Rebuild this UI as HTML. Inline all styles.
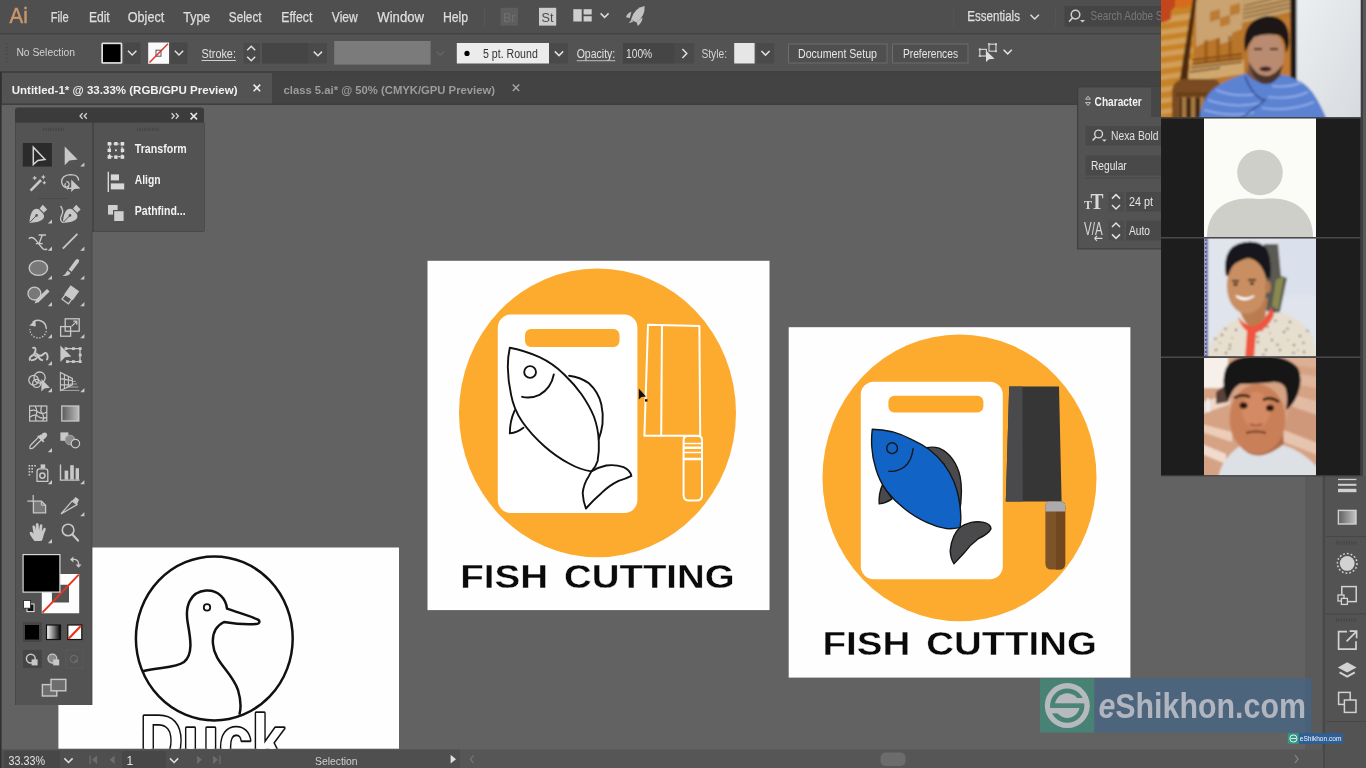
<!DOCTYPE html>
<html lang="en"><head><meta charset="utf-8"><title>Adobe Illustrator - Fish Cutting class</title>
<style>
html,body{margin:0;padding:0;background:#555;overflow:hidden;}
body{width:1366px;height:768px;font-family:"Liberation Sans",sans-serif;}
svg{display:block;position:absolute;left:0;top:0;filter:blur(0.45px);}
text{font-family:"Liberation Sans",sans-serif;}
.b{font-weight:bold;}
</style></head><body>
<svg width="1366" height="768" viewBox="0 0 1366 768">
<!-- canvas -->
<rect x="0" y="0" width="1366" height="768" fill="#626262"/>
<!-- menu bar -->
<rect x="0" y="0" width="1366" height="33" fill="#4f4f4f"/>
<!-- control bar -->
<rect x="0" y="33" width="1366" height="39" fill="#535353"/>
<rect x="0" y="33" width="1366" height="1.5" fill="#444"/>
<!-- tab bar -->
<rect x="0" y="72" width="1366" height="32" fill="#434343"/>
<rect x="0" y="71" width="1366" height="1.5" fill="#404040"/>
<rect x="2" y="73" width="270" height="31" fill="#535353"/>
<rect x="0" y="103.4" width="1366" height="1.6" fill="#3f3f3f"/>
<rect x="0" y="72" width="1.6" height="696" fill="#303030"/>

<!-- ===== menu bar ===== -->
<g fill="#dedede" font-size="13.9" stroke="#dedede" stroke-width="0.25">
<text x="9.5" y="23.4" font-size="22.8" fill="#c9976b" stroke="#c9976b" stroke-width="0.5" textLength="18.2" lengthAdjust="spacingAndGlyphs">Ai</text>
<text x="50.8" y="21.8" textLength="18" lengthAdjust="spacingAndGlyphs">File</text>
<text x="88.9" y="21.8" textLength="20.8" lengthAdjust="spacingAndGlyphs">Edit</text>
<text x="127.7" y="21.8" textLength="36.6" lengthAdjust="spacingAndGlyphs">Object</text>
<text x="183.3" y="21.8" textLength="27" lengthAdjust="spacingAndGlyphs">Type</text>
<text x="228.8" y="21.8" textLength="32.8" lengthAdjust="spacingAndGlyphs">Select</text>
<text x="281.3" y="21.8" textLength="31" lengthAdjust="spacingAndGlyphs">Effect</text>
<text x="331.8" y="21.8" textLength="26" lengthAdjust="spacingAndGlyphs">View</text>
<text x="377.3" y="21.8" textLength="46.7" lengthAdjust="spacingAndGlyphs">Window</text>
<text x="442.9" y="21.8" textLength="25.3" lengthAdjust="spacingAndGlyphs">Help</text>
<text x="967.2" y="20.5" font-size="14.3" textLength="52.8" lengthAdjust="spacingAndGlyphs">Essentials</text>
</g>
<rect x="484" y="8" width="1" height="18" fill="#575757"/>
<!-- Br -->
<rect x="500.5" y="7.8" width="17.5" height="17.8" fill="#5e5e5e"/>
<text x="503" y="21.6" font-size="12.5" fill="#707070" textLength="12.5" lengthAdjust="spacingAndGlyphs">Br</text>
<!-- St -->
<rect x="539" y="7.8" width="17.2" height="17.8" fill="#cdcdcd"/>
<text x="541.6" y="21.8" font-size="13" fill="#4a4a4a" textLength="12" lengthAdjust="spacingAndGlyphs">St</text>
<!-- arrange docs icon -->
<g fill="#cfcfcf"><rect x="573.3" y="9.2" width="8.4" height="12.3"/><rect x="583.6" y="9.2" width="8.1" height="5.3"/><rect x="583.6" y="16.2" width="8.1" height="5.3"/></g>
<path d="M600.6,13.4 l4,4 l4,-4" fill="none" stroke="#dcdcdc" stroke-width="1.5"/>
<!-- rocket icon -->
<g fill="#c2c2c2">
<path d="M644.6,6 q-10.6,2 -13.6,13.6 l5.4,3 q9,-6.4 8.2,-16.6z"/>
<path d="M631.4,11.8 q-4,1.4 -5.4,5.4 l3.8,0.8z"/>
<path d="M642.6,17.6 q-0.4,5 -4.8,8.4 l-1.2,-4z"/>
<path d="M631.6,19.8 l-3,3.4 l5,-1.6z"/>
</g>
<!-- essentials chevron -->
<path d="M1030.5,14.8 l4.2,4.2 l4.2,-4.2" fill="none" stroke="#dcdcdc" stroke-width="1.5"/>
<rect x="953" y="6" width="1" height="21" fill="#545454"/>
<rect x="1055" y="6" width="1" height="21" fill="#545454"/>
<!-- search box -->
<rect x="1064.6" y="6" width="100" height="20.6" fill="#454545"/>
<circle cx="1075.5" cy="14.6" r="4.3" fill="none" stroke="#d0d0d0" stroke-width="1.5"/>
<path d="M1072.5,18 l-3.4,3.6" stroke="#d0d0d0" stroke-width="1.6"/>
<path d="M1080,20 h5 l-2.5,2.5z" fill="#d0d0d0"/>
<text x="1090.5" y="20.4" font-size="12.2" fill="#787878" textLength="72" lengthAdjust="spacingAndGlyphs">Search Adobe S</text>

<!-- ===== control bar ===== -->
<g fill="#444"><rect x="6" y="43" width="1.2" height="1.6"/><rect x="6" y="46.5" width="1.2" height="1.6"/><rect x="6" y="50" width="1.2" height="1.6"/><rect x="6" y="53.5" width="1.2" height="1.6"/><rect x="6" y="57" width="1.2" height="1.6"/><rect x="6" y="60.5" width="1.2" height="1.6"/></g>
<text x="16.4" y="56.4" font-size="11.8" fill="#d2d2d2" textLength="58.6" lengthAdjust="spacingAndGlyphs">No Selection</text>
<!-- fill swatch -->
<rect x="101.3" y="42.5" width="21" height="21.3" rx="1.5" fill="#e2e2e2"/>
<rect x="103" y="44.2" width="17.6" height="17.9" fill="#000"/>
<rect x="123.7" y="42.5" width="16.8" height="21.3" fill="#484848"/>
<path d="M128,50.8 l4.2,4.2 l4.2,-4.2" fill="none" stroke="#e0e0e0" stroke-width="1.5"/>
<!-- stroke swatch -->
<rect x="148.2" y="42.5" width="20.8" height="21.3" fill="#fbfbfb"/>
<rect x="156" y="50.2" width="5" height="6" fill="none" stroke="#555" stroke-width="1"/>
<path d="M149.5,62.5 l18.5,-18.8" stroke="#e2332c" stroke-width="1.5"/>
<rect x="170.6" y="42.5" width="16.8" height="21.3" fill="#484848"/>
<path d="M174.8,50.8 l4.2,4.2 l4.2,-4.2" fill="none" stroke="#e0e0e0" stroke-width="1.5"/>
<!-- stroke -->
<text x="201.6" y="58" font-size="12" fill="#e0e0e0" textLength="34.3" lengthAdjust="spacingAndGlyphs">Stroke:</text>
<rect x="201.6" y="60" width="34.3" height="1" fill="#cfcfcf"/>
<rect x="243.5" y="43" width="16.3" height="20.5" fill="#4a4a4a"/>
<path d="M247.2,50.2 l4,-4 l4,4 M247.2,56.8 l4,4 l4,-4" fill="none" stroke="#e0e0e0" stroke-width="1.5"/>
<rect x="262" y="43" width="46.6" height="20.5" fill="#454545"/>
<rect x="308.6" y="43" width="18.4" height="20.5" fill="#4a4a4a"/>
<path d="M313.8,51.6 l4.1,4.1 l4.1,-4.1" fill="none" stroke="#e0e0e0" stroke-width="1.5"/>
<!-- variable width -->
<rect x="334.2" y="41" width="96.4" height="23.6" fill="#7b7b7b"/>
<path d="M436.6,51.6 l3.6,3.6 l3.6,-3.6" fill="none" stroke="#686868" stroke-width="1.3"/>
<!-- brush -->
<rect x="456.8" y="43" width="92.2" height="20.5" fill="#ececec"/>
<circle cx="467" cy="53.4" r="2.6" fill="#000"/>
<text x="483" y="58" font-size="12" fill="#333" textLength="54.8" lengthAdjust="spacingAndGlyphs">5 pt. Round</text>
<rect x="549" y="43" width="19" height="20.5" fill="#4a4a4a"/>
<path d="M554.8,51.4 l4.2,4.2 l4.2,-4.2" fill="none" stroke="#e0e0e0" stroke-width="1.5"/>
<!-- opacity -->
<text x="576.7" y="58" font-size="12" fill="#e0e0e0" textLength="38.6" lengthAdjust="spacingAndGlyphs">Opacity:</text>
<rect x="576.7" y="60.2" width="38.6" height="1" fill="#bdbdbd"/>
<rect x="622.9" y="43" width="51.8" height="20.5" fill="#454545"/>
<text x="626" y="58" font-size="12" fill="#e0e0e0" textLength="26.2" lengthAdjust="spacingAndGlyphs">100%</text>
<rect x="674.7" y="43" width="19.5" height="20.5" fill="#4a4a4a"/>
<path d="M682.4,49 l4.4,4.5 l-4.4,4.5" fill="none" stroke="#e0e0e0" stroke-width="1.5"/>
<!-- style -->
<text x="701.4" y="58" font-size="12" fill="#d2d2d2" textLength="25.6" lengthAdjust="spacingAndGlyphs">Style:</text>
<rect x="734.2" y="43" width="20.4" height="20.5" fill="#e6e6e6"/>
<rect x="756.4" y="43" width="17.8" height="20.5" fill="#4a4a4a"/><path d="M761.4,51 l4.1,4.1 l4.1,-4.1" fill="none" stroke="#e0e0e0" stroke-width="1.5"/>
<!-- buttons -->
<rect x="788.5" y="44" width="98.5" height="19" fill="#4f4f4f" stroke="#6c6c6c" stroke-width="1"/>
<text x="798" y="58" font-size="12" fill="#e6e6e6" textLength="79" lengthAdjust="spacingAndGlyphs">Document Setup</text>
<rect x="892.5" y="44" width="75.5" height="19" fill="#4f4f4f" stroke="#6c6c6c" stroke-width="1"/>
<text x="903" y="58" font-size="12" fill="#e6e6e6" textLength="55" lengthAdjust="spacingAndGlyphs">Preferences</text>
<!-- align-to icon -->
<g fill="none" stroke="#cdcdcd" stroke-width="1.2"><rect x="989" y="44.2" width="7" height="7"/><rect x="979.8" y="49.4" width="6.6" height="6.6"/></g>
<g fill="#cdcdcd"><rect x="988" y="43.2" width="2" height="2"/><rect x="995" y="43.2" width="2" height="2"/><rect x="995" y="50.2" width="2" height="2"/><rect x="978.8" y="48.4" width="2" height="2"/><rect x="978.8" y="55" width="2" height="2"/></g>
<path d="M986,50.6 v11.4 l3,-2.8 l5.6,-0.4z" fill="#e0e0e0"/>
<path d="M1003.6,49.8 l4.1,4.1 l4.1,-4.1" fill="none" stroke="#e0e0e0" stroke-width="1.5"/>

<!-- ===== tabs ===== -->
<text class="b" x="11.7" y="93.6" font-size="11.6" fill="#f2f2f2" textLength="225.8" lengthAdjust="spacingAndGlyphs">Untitled-1* @ 33.33% (RGB/GPU Preview)</text>
<path d="M253.6,84.6 l6.6,6.6 M260.2,84.6 l-6.6,6.6" stroke="#f0f0f0" stroke-width="1.5"/>
<text class="b" x="283.5" y="93.6" font-size="11.6" fill="#9c9c9c" textLength="211.5" lengthAdjust="spacingAndGlyphs">class 5.ai* @ 50% (CMYK/GPU Preview)</text>
<path d="M512.8,84.6 l6.4,6.4 M519.2,84.6 l-6.4,6.4" stroke="#a8a8a8" stroke-width="1.4"/>

<!-- artboard 1 -->
<rect x="427.5" y="260.8" width="342" height="349.3" fill="#fefefe"/>
<ellipse cx="597.5" cy="412.9" rx="138.5" ry="144.4" fill="#fdab2f"/>
<rect x="497.8" y="314.6" width="139.6" height="198.4" rx="13" fill="#fff"/>
<rect x="525" y="329" width="94.5" height="18" rx="6" fill="#fdab2f"/>
<!-- artboard 2 -->
<rect x="788.7" y="327.2" width="341.7" height="350.4" fill="#fefefe"/>
<ellipse cx="959.5" cy="477.8" rx="137" ry="143.4" fill="#fdab2f"/>
<rect x="860.8" y="381.7" width="142" height="197.5" rx="13" fill="#fff"/>
<rect x="888.4" y="395.7" width="95" height="16.8" rx="6" fill="#fdab2f"/>
<!-- artboard 3 (duck) -->
<rect x="58.4" y="547.5" width="340.6" height="201.2" fill="#fefefe"/>

<!-- ===== artboard 1 details ===== -->
<g fill="none" stroke="#111" stroke-width="1.9" stroke-linejoin="round" stroke-linecap="round">
 <!-- fish body -->
 <path d="M509.8,347.8 C520,349.6 530,353 539.5,357.2 C549,361.6 557,367.4 564.2,374.5 C571,381 576.6,387.4 581.5,394.3 C586.4,401.4 590.6,408.6 593.9,416.5 C596.8,424.4 598.4,432.6 598.8,441.3 C599.2,448 598.8,454.6 597.6,461 C596.4,465 594.4,468.6 591.4,471.4 C583.6,470.2 576,467.4 569.1,463.5 C560,458.6 551.8,452.8 544.4,446.2 C536,438.8 528.4,430.6 522.1,421.5 C516.4,413 512.8,404 511,394.3 C509,385.4 508,376.4 507.8,367.1 C507.8,360.4 508.4,354 509.8,347.8z"/>
 <!-- dorsal fin -->
 <path d="M569.1,375.7 C576.4,376.6 583.2,379.2 588.9,383.2 C595,388.8 599.4,395.8 601.3,404.2 C602.8,410.8 603.2,417.4 602.5,424 C601.8,429.2 600.6,434.2 598.8,438.8"/>
 <!-- tail -->
 <path d="M591.4,471.4 C596,468.6 601,466.6 606.2,465.5 C612,464.6 618,465.2 623.5,467.2 C627.6,469 630.4,472 631.4,475.9 C627.4,478 623,479.6 618.6,480.8 C612,484 606.2,488.2 601.3,493.2 C595.6,498 590.6,503.2 585.9,508.5 C584,503.6 583,498.4 582.7,493.2 C583.2,487 585.4,481.2 588.9,475.9z"/>
 <!-- pectoral fin -->
 <path d="M514.7,410.4 C511.4,417.6 509.8,425.4 509.8,433.4 C514.8,432.8 519.4,430.8 523.4,427.7"/>
 <!-- eye + smile -->
 <circle cx="530.1" cy="372" r="5.9"/>
 <path d="M522.1,396.8 C528,398.2 534,397.4 539.5,394.8 C547,390.6 552,383.6 553.8,374.5"/>
</g>
<!-- knife outline -->
<g fill="none" stroke="#fff" stroke-width="2" stroke-linejoin="round">
 <path d="M648,324.8 L699.4,326 L700.2,435.8 L644.4,435.8z"/>
 <path d="M662,325 L661.2,435.8"/>
 <path d="M683.6,440 q0,-4 4,-4 h10.4 q4,0 4,4 v55 q0,5.6 -5.6,5.6 h-7.2 q-5.6,0 -5.6,-5.6z"/>
 <path d="M683.6,443.4 h18.4 M683.6,452.6 h18.4" stroke-width="1.5"/>
 <path d="M683.6,447.8 h18.4 M683.6,459 h18.4" stroke-width="2.4"/>
</g>
<!-- cursor -->
<path d="M638.8,388.6 V399.4 L641.4,397 L646,396.6z" fill="#111"/>
<rect x="645" y="399.2" width="2.4" height="2.4" fill="#111"/>
<!-- caption -->
<g class="b" font-size="33.9" fill="#0a0a0a" stroke="#fff" stroke-width="0.35"><text x="460.2" y="587.6" textLength="88" lengthAdjust="spacingAndGlyphs">FISH</text><text x="564" y="587.6" textLength="170.6" lengthAdjust="spacingAndGlyphs">CUTTING</text></g>
<!-- ===== artboard 2 details ===== -->
<!-- knife -->
<path d="M1009.2,386.6 L1059,386.6 L1061.6,501.4 L1005.8,501.4z" fill="#363637"/>
<path d="M1009.2,386.6 L1022.4,386.6 L1022.8,501.4 L1005.8,501.4z" fill="#4a4a4c"/>
<path d="M1045.4,506 q0,-4.6 4.6,-4.6 h10.6 q4.6,0 4.6,4.6 v57.6 q0,6 -6,6 h-7.8 q-6,0 -6,-6z" fill="#7d532a"/>
<path d="M1056,501.4 h4.6 q4.6,0 4.6,4.6 v57.6 q0,6 -6,6 h-3.2z" fill="#70471f"/>
<path d="M1045.4,511.6 v-5.6 q0,-4.6 4.6,-4.6 h10.6 q4.6,0 4.6,4.6 v5.6z" fill="#ababab"/>
<!-- fish -->
<g stroke="#151515" stroke-width="1.4" stroke-linejoin="round">
 <path d="M926.7,447.7 C931,446.8 935.2,447 939.1,448.2 C944.6,450.6 949.2,454.4 952.7,459.3 C956.4,464.6 958.8,470.4 960.1,476.7 C961.2,482.4 961.6,488.2 961.3,494 C961.2,500 960.6,506 959.6,512 L944,464z" fill="#4a4a4c"/>
 <path d="M960.1,527.3 C963.4,525 967.2,523.4 971.2,522.4 C975.4,521.6 979.6,521.6 983.6,522.4 C987.6,523.2 990.6,525.4 991,528.6 C989.6,531.8 984,536 978.6,538.5 C973,542.6 968,547.6 963.8,553.3 C960.4,557 957,560.6 953.9,563.7 C951.6,560 950.4,555.6 950.2,550.8 C950.6,545.6 951.8,540.6 953.9,536 C955.6,532.8 957.6,529.8 960.1,527.3z" fill="#4a4a4c"/>
 <path d="M882.7,484.1 C880,490.4 878.6,497 879.2,503.9 C883.8,503.4 888.2,501.6 892.1,498.9z" fill="#4a4a4c"/>
 <path d="M872.3,429.2 C879,429.4 885.6,430.2 892.1,431.7 C899,433.6 905.6,436.2 911.9,439.6 C918,442.4 923.8,445.6 929.2,449.5 C934.8,453.8 939.8,458.8 944,464.3 C948,469.6 951.4,475.4 953.9,481.6 C956.2,487.2 957.8,493 958.9,498.9 C960,504.6 960.6,510.4 960.8,516.2 C960.9,520 960.6,523.6 960.1,527.3 C955.6,528.6 951,529 946.5,528.6 C939.6,527.6 933,525.4 926.7,522.4 C918.6,518.8 911.2,514.2 904.5,508.8 C898,503.8 892.2,498 887.1,491.5 C882.2,484.8 878.4,477.4 876,469.2 C873.6,462 872.2,454.6 871.8,447 C871.4,441 871.6,435 872.3,429.2z" fill="#1263c6"/>
 <circle cx="892.1" cy="448.2" r="5.4" fill="#1263c6"/>
 <path d="M888.4,471.2 C894,472 899.4,470.6 904.5,466.8 C909.8,462.4 912.4,456 913.1,448.2" fill="none"/>
</g>
<g class="b" font-size="33.9" fill="#0a0a0a" stroke="#fff" stroke-width="0.35"><text x="822.4" y="655" textLength="88" lengthAdjust="spacingAndGlyphs">FISH</text><text x="926.2" y="655" textLength="170.6" lengthAdjust="spacingAndGlyphs">CUTTING</text></g>
<!-- ===== duck artboard ===== -->
<defs><clipPath id="cduck"><rect x="58.4" y="547.5" width="340.6" height="201.2"/></clipPath></defs>
<g clip-path="url(#cduck)" fill="none" stroke="#111" stroke-width="2.5" stroke-linejoin="round" stroke-linecap="round">
 <ellipse cx="214.3" cy="638.4" rx="78.4" ry="82"/>
 <path d="M143.6,671 C160,667 176,668 184,662 C194,654 190,636 187.6,622 C185,606 190,592 206,590.6 C219,590 226,599 227,608.6 C238,612.6 250,616 258,619.6 C260.4,621 259.6,624 256,624 C246,624.6 234,623.6 224,622 C216,626 212,634 213,644 C214,662 232,672 238,690 C241,700 241,708 239.6,713.6"/>
 <circle cx="207" cy="607.4" r="3.2" stroke-width="1.8"/>
 <text x="140" y="766.4" font-size="73" font-weight="bold" fill="#fff" stroke="#111" stroke-width="3.6" textLength="145" lengthAdjust="spacingAndGlyphs" style="paint-order:stroke">Duck</text>
</g>

<!-- ===== tools panel ===== -->
<path d="M15,125 v-14.6 q0,-3 3,-3 h183 q3,0 3,3 v14.6z" fill="#3b3b3b"/>
<rect x="15" y="122.6" width="77" height="582.4" fill="#535353"/>
<rect x="15" y="122.6" width="1" height="582.4" fill="#484848"/>
<rect x="92" y="122.6" width="2.2" height="109.4" fill="#454545"/><rect x="91.4" y="232" width="1" height="473" fill="#4a4a4a"/>
<rect x="94" y="122.6" width="110.2" height="108.4" fill="#535353"/>
<rect x="94" y="231" width="110.2" height="1" fill="#4a4a4a"/>
<rect x="204" y="122.6" width="1" height="108.4" fill="#4d4d4d"/>
<!-- header glyphs -->
<g fill="none" stroke="#d2d2d2" stroke-width="1.3">
 <path d="M82.6,113.2 l-2.6,2.8 l2.6,2.8 M86.8,113.2 l-2.6,2.8 l2.6,2.8"/>
 <path d="M171.6,113.2 l2.6,2.8 l-2.6,2.8 M175.8,113.2 l2.6,2.8 l-2.6,2.8"/>
 <path d="M190.6,113 l6.4,6.4 M197,113 l-6.4,6.4" stroke-width="1.6" stroke="#e6e6e6"/>
</g>
<g stroke="#454545" stroke-width="3.4" stroke-dasharray="1.2 1.3"><path d="M43,129.4 h20.6"/><path d="M137,129.4 h22.6"/></g>
<rect x="38" y="198" width="30" height="1" fill="#494949"/>
<!-- selected tool bg -->
<rect x="22.8" y="143" width="29.1" height="23.6" fill="#2b2b2b"/>
<g id="tri" fill="#c8c8c8">
 <path d="M84.4,162.4 v4.2 h-4.2z"/><path d="M52,219.4 v4.2 h-4.2z"/><path d="M52,246.6 v4.2 h-4.2z"/><path d="M84.4,246.6 v4.2 h-4.2z"/>
 <path d="M52,275.4 v4.2 h-4.2z"/><path d="M84.4,275.4 v4.2 h-4.2z"/><path d="M52,302 v4.2 h-4.2z"/><path d="M84.4,302 v4.2 h-4.2z"/>
 <path d="M52,334 v4.2 h-4.2z"/><path d="M84.4,334 v4.2 h-4.2z"/><path d="M52,361 v4.2 h-4.2z"/>
 <path d="M52,388 v4.2 h-4.2z"/><path d="M84.4,388 v4.2 h-4.2z"/><path d="M52,448 v4.2 h-4.2z"/>
 <path d="M52,480 v4.2 h-4.2z"/><path d="M84.4,480 v4.2 h-4.2z"/><path d="M84.4,512 v4.2 h-4.2z"/><path d="M52,539 v4.2 h-4.2z"/>
</g>
<!-- row1: selection / direct selection -->
<path d="M33.3,147.2 V164.6 L37.8,160.4 L45,159.4z" fill="none" stroke="#d4d4d4" stroke-width="1.5" stroke-linejoin="miter"/>
<path d="M64.7,146.6 V165.2 L69.4,160.6 L77.6,159.4z" fill="#c8c8c8"/>
<!-- row2: magic wand / lasso -->
<path d="M30.6,190.6 l10.4,-10.6" stroke="#c8c8c8" stroke-width="2.6"/>
<g fill="#c8c8c8"><path d="M34.7,175.4 l0.8,1.8 l1.8,0.8 l-1.8,0.8 l-0.8,1.8 l-0.8,-1.8 l-1.8,-0.8 l1.8,-0.8z"/><path d="M43.3,174.6 l0.8,1.6 l1.6,0.8 l-1.6,0.8 l-0.8,1.6 l-0.8,-1.6 l-1.6,-0.8 l1.6,-0.8z"/><path d="M44.3,180.6 l0.7,1.4 l1.4,0.7 l-1.4,0.7 l-0.7,1.4 l-0.7,-1.4 l-1.4,-0.7 l1.4,-0.7z"/></g>
<g fill="none" stroke="#c8c8c8" stroke-width="1.3"><path d="M73,188 q-10,2 -11.4,-6 q0,-7 9,-7.4 q8,0 8,6"/><path d="M66.4,181.5 q3.2,0.4 2.6,3.4 q-1,2.6 -3.4,1.6 q-1.6,-1.6 0.2,-3.2"/><path d="M67,189.4 q2,-1 1.6,-3"/></g>
<path d="M71.2,179.4 V192 L74.2,189 L80.4,188.4z" fill="#c8c8c8"/>
<!-- row3: pen / curvature -->
<g fill="#c8c8c8">
 <path d="M29.5,222.7 C29.8,217 31,212 34,209.6 C36,208.2 38,208.6 39.4,209.8 L43,213.6 C44.4,215.4 44.4,217.4 43,219 C40,222 34.6,222.6 29.5,222.7z"/>
 <path d="M42.8,204.8 L47.2,209.4 L43.8,212.8 L39.6,208.4z"/>
 <path d="M62.9,222.7 C63.2,217 64.4,212 67.4,209.6 C69.4,208.2 71.4,208.6 72.8,209.8 L76.4,213.6 C77.8,215.4 77.8,217.4 76.4,219 C73.4,222 68,222.6 62.9,222.7z"/>
 <path d="M76.2,204.8 L80.6,209.4 L77.2,212.8 L73,208.4z"/>
</g>
<path d="M30,222.2 l6,-6.2" stroke="#535353" stroke-width="1"/><circle cx="36.6" cy="215.4" r="1.3" fill="#535353"/>
<path d="M63.4,222.2 l6,-6.2" stroke="#535353" stroke-width="1"/><circle cx="70" cy="215.4" r="1.3" fill="#535353"/>
<path d="M60.6,206 q3.6,5 1,9.4 q-2.6,4.6 1.4,7.4" fill="none" stroke="#c8c8c8" stroke-width="1.3"/>
<!-- row4: touch type / line -->
<g fill="none" stroke="#c8c8c8" stroke-width="1.4"><path d="M28.8,238.6 q3.4,-2.4 6.4,0.8 l7.4,9 q2.2,2 4.6,0.4"/><path d="M38.6,235 h7.4 M42.3,235 l-3,8 M35.8,243.6 h7"/></g>
<path d="M62.8,248.6 L77.4,233.8" stroke="#c8c8c8" stroke-width="1.8"/>
<!-- row5: ellipse / brush -->
<ellipse cx="38.4" cy="268" rx="9.2" ry="7.4" fill="#787878" stroke="#c8c8c8" stroke-width="1.4"/>
<path d="M78.6,259.4 q1.2,1 0,3 l-7,9.4 l-3,-2.4 l7,-9.4 q1.6,-1.6 3,-0.6z M67.6,270.6 l3,2.4 q-1.6,3.4 -8,3 q3,-1.6 5,-5.4z" fill="#c8c8c8"/>
<!-- row6: shaper / eraser -->
<circle cx="34.4" cy="293.6" r="6.4" fill="#787878" stroke="#c8c8c8" stroke-width="1.3"/>
<path d="M34.6,303.6 l1.4,-4 l11,-10.6 l2.6,2.6 l-11,10.6z" fill="#c8c8c8"/>
<path d="M70.6,285.2 l8.6,6 l-6.4,9 l-8.6,-6z" fill="#c8c8c8"/>
<path d="M65.4,294.6 l-3.4,4.6 l6.4,4.6 l3.6,-4.8z" fill="none" stroke="#c8c8c8" stroke-width="1.3"/>
<!-- row7: rotate / scale -->
<path d="M32.6,322.4 a8.2,8.2 0 0 1 13.6,5.6" fill="none" stroke="#c8c8c8" stroke-width="1.5"/>
<path d="M46.2,328 a8.2,8.2 0 1 1 -16.2,1" fill="none" stroke="#c8c8c8" stroke-width="1.3" stroke-dasharray="1.4 1.6"/>
<path d="M29.4,325.6 l6,-5.6 l0.4,6.4z" fill="#c8c8c8"/>
<g fill="none" stroke="#c8c8c8" stroke-width="1.3"><rect x="60.6" y="326.6" width="10" height="9.6"/><rect x="65.2" y="318.8" width="14" height="12.4"/><path d="M71.6,326.4 l5,-5 M73.2,321.2 h3.6 v3.6"/></g>
<!-- row8: warp / free transform -->
<g fill="none" stroke="#c8c8c8" stroke-width="1.9"><path d="M32.4,348 q4,-1.4 3,3 q-1,4 -4,5 q-2.4,1.8 -1.4,4.6 M36,353 q4,5 7.6,1 q3,-3 4,2 q0.4,3 -1.2,4 M31,360.4 q6,-0.6 7,-5 q1,4 5,5"/></g>
<circle cx="35.6" cy="355.6" r="1.4" fill="#c8c8c8"/>
<path d="M60.4,345.4 V362 L65,357.2 L71.4,356.4z" fill="#c8c8c8"/>
<g fill="none" stroke="#c8c8c8" stroke-width="1.3"><path d="M66,348.6 h14 v13 h-12"/></g>
<g fill="#c8c8c8"><rect x="64.6" y="347.2" width="2.8" height="2.8"/><rect x="72" y="347.2" width="2.8" height="2.8"/><rect x="78.8" y="347.2" width="2.8" height="2.8"/><rect x="78.8" y="353.6" width="2.8" height="2.8"/><rect x="78.8" y="360.2" width="2.8" height="2.8"/><rect x="72" y="360.2" width="2.8" height="2.8"/><rect x="66" y="360.2" width="2.8" height="2.8"/></g>
<!-- row9: shape builder / perspective -->
<g fill="none" stroke="#c8c8c8" stroke-width="1.3"><circle cx="33.6" cy="380.2" r="4.8"/><circle cx="39.6" cy="377.6" r="5.6"/><circle cx="36.6" cy="383.4" r="4"/></g>
<path d="M41.4,379 V391.4 L44.4,388.4 L50,387.8z" fill="#c8c8c8"/>
<g fill="none" stroke="#c8c8c8" stroke-width="1.1"><path d="M60.4,372.4 V390.6 L72.4,385 V378.4z M64.4,374.4 V388.8 M68.4,376.4 V386.8 M60.4,378.6 l12,2 M60.4,384.6 l12,0.4"/><path d="M72.4,381.4 h3.4 M70,384 h7 M66,387 h12.4 M61,390.4 h18.4" stroke-width="0.9" opacity="0.8"/></g>
<!-- row10: mesh / gradient -->
<defs><linearGradient id="tg" x1="0" y1="0" x2="1" y2="0"><stop offset="0" stop-color="#5a5a5a"/><stop offset="1" stop-color="#bdbdbd"/></linearGradient>
<linearGradient id="tg2" x1="0" y1="0" x2="1" y2="0"><stop offset="0" stop-color="#fff"/><stop offset="1" stop-color="#000"/></linearGradient></defs>
<g fill="none" stroke="#c8c8c8" stroke-width="1.2"><rect x="29.6" y="406" width="17.2" height="15"/><path d="M29.6,411 q5,-2 8.6,1 q4,3 8.6,0 M29.6,417.4 q5,-4 8.6,-1 q4,3 8.6,1 M35,406 q3,5 1,9 q-1,3 0,6 M41.6,406 q-2,5 1,8 q2,4 0,7"/></g>
<rect x="61.8" y="406" width="17" height="15" fill="url(#tg)" stroke="#c8c8c8" stroke-width="1.3"/>
<!-- row11: eyedropper / blend -->
<path d="M30,448.4 q-0.8,-2 1,-3.6 l9.4,-9.4 l2.6,2.6 l-9.4,9.4 q-2,1.6 -3.6,1z" fill="none" stroke="#c8c8c8" stroke-width="1.3"/>
<path d="M39.6,436.6 l3,-3.4 q2.4,-1.6 4,0 q1.4,1.6 -0.2,3.8 l-3.2,3 1.2,1.2 -1.2,1.2 -6,-6 1.2,-1.2z" fill="#c8c8c8"/>
<rect x="60.4" y="432.4" width="8" height="8.4" fill="#c8c8c8"/>
<circle cx="70" cy="440" r="4.8" fill="#8a8a8a" stroke="#a8a8a8" stroke-width="1"/>
<circle cx="75.4" cy="443.6" r="4.2" fill="#535353" stroke="#c8c8c8" stroke-width="1.3"/>
<!-- row12: symbol sprayer / graph -->
<g fill="#c8c8c8"><rect x="28.6" y="465" width="1.6" height="1.6"/><rect x="31.4" y="465" width="1.6" height="1.6"/><rect x="34.2" y="465" width="1.6" height="1.6"/><rect x="28.6" y="468" width="1.6" height="1.6"/><rect x="31.4" y="468" width="1.6" height="1.6"/><rect x="28.6" y="471" width="1.6" height="1.6"/><rect x="31.4" y="471" width="1.6" height="1.6"/><rect x="28.6" y="474" width="1.6" height="1.6"/><rect x="40.6" y="464.4" width="4.6" height="4"/></g>
<path d="M37,481.4 v-10 q0,-2.6 2.6,-2.6 h5.6 q2.6,0 2.6,2.6 v10z" fill="none" stroke="#c8c8c8" stroke-width="1.3"/>
<circle cx="42.4" cy="475.6" r="2.6" fill="none" stroke="#c8c8c8" stroke-width="1.5"/>
<g fill="#c8c8c8"><path d="M59.8,464.4 h1.4 v15 h18.4 v1.4 h-19.8z"/><rect x="64.6" y="470.6" width="3.6" height="9"/><rect x="70.2" y="465.2" width="3.6" height="14.4"/><rect x="75.6" y="468.2" width="3.4" height="11.4"/></g>
<!-- row13: artboard / slice -->
<path d="M33.4,501.2 h8 l4.2,4 v7.6 h-12.2z" fill="#787878" stroke="#c8c8c8" stroke-width="1.3"/>
<path d="M41.4,501.2 v4 h4.2" fill="none" stroke="#c8c8c8" stroke-width="1"/>
<path d="M33.2,495 v6 M27.4,501.2 h6" stroke="#c8c8c8" stroke-width="1.2"/>
<path d="M61,514 l11,-13 l5,3.6z" fill="none" stroke="#c8c8c8" stroke-width="1.2"/><path d="M72,501 l3.6,-4 l3.4,2.4 l-2,5.2z" fill="#c8c8c8"/>
<!-- row14: hand / zoom -->
<path d="M34.4,541 q-1.6,-2 -4.4,-6.6 q-1,-2 0.6,-2.6 q1.4,-0.2 3,2 l-1.2,-7 q0,-1.6 1.2,-1.6 q1.2,0 1.6,1.6 l0.8,3.4 l-0.2,-5.6 q0.2,-1.6 1.4,-1.6 q1.4,0 1.4,1.6 l0.4,5.6 l0.8,-4.8 q0.4,-1.4 1.6,-1.2 q1.2,0.2 1,1.8 l-0.6,5.6 l1.6,-3 q0.8,-1.2 1.8,-0.6 q1,0.6 0.4,2 q-2,4.6 -2.4,7 q-0.6,3 -2,4z" fill="#c8c8c8"/>
<circle cx="68.1" cy="530" r="5.8" fill="none" stroke="#c8c8c8" stroke-width="1.6"/>
<path d="M72.4,534.6 l5.6,6" stroke="#c8c8c8" stroke-width="2.2" stroke-linecap="round"/>
<!-- fill / stroke swatches -->
<path d="M41.8,574 h37.4 v39.3 h-37.4z M51.9,584.7 v17.9 h17.1 v-17.9z" fill="#fdfdfd" fill-rule="evenodd"/>
<path d="M42.4,612.6 L78.8,574.6" stroke="#e8341f" stroke-width="2"/>
<rect x="22.5" y="554" width="38" height="38.7" fill="#d8d8d8"/>
<rect x="23.7" y="555.2" width="35.6" height="36.3" fill="#000"/>
<g fill="none" stroke="#c8c8c8" stroke-width="1.4"><path d="M71.6,559.4 h3 q4,0.6 4,5 v1.4"/></g>
<path d="M70,559.4 l3.4,-3 v6z M78.6,567.8 l-3,-3.4 h6z" fill="#c8c8c8"/>
<rect x="27" y="604" width="7" height="7.6" fill="#111" stroke="#e8e8e8" stroke-width="1"/>
<rect x="23.6" y="600.6" width="7" height="7.6" fill="#fff" stroke="#222" stroke-width="0.8"/>
<!-- color / gradient / none -->
<rect x="22.9" y="622.3" width="18.9" height="19.7" fill="#454545"/>
<rect x="25" y="625" width="14" height="14.5" fill="#000"/>
<rect x="46.5" y="625" width="14" height="14.5" fill="url(#tg2)" stroke="#111" stroke-width="1.2"/>
<rect x="67.8" y="625" width="14" height="14.5" fill="#fff" stroke="#111" stroke-width="1.2"/>
<path d="M68.6,638.8 l12.4,-13" stroke="#e8341f" stroke-width="2.2"/>
<!-- draw modes -->
<rect x="22.9" y="649.8" width="18.9" height="18.2" fill="#454545"/>
<circle cx="30.8" cy="658.6" r="4.4" fill="none" stroke="#c8c8c8" stroke-width="1.5"/><rect x="31.6" y="659.4" width="6" height="6" fill="#c8c8c8"/>
<circle cx="52.4" cy="658.6" r="4.4" fill="#8a8a8a" stroke="#c8c8c8" stroke-width="1.3"/><rect x="53.2" y="659.4" width="6" height="6" fill="#c8c8c8"/>
<rect x="66" y="650" width="17" height="18" fill="none" stroke="#5c5c5c" stroke-width="0.8"/>
<circle cx="74" cy="659" r="3.6" fill="none" stroke="#6a6a6a" stroke-width="1.3"/><rect x="74.6" y="659.6" width="3" height="3" fill="#6a6a6a"/>
<!-- screen mode -->
<rect x="42.4" y="684.6" width="14.4" height="11.4" fill="#6e6e6e" stroke="#c8c8c8" stroke-width="1.4"/>
<rect x="51" y="679.4" width="14.8" height="11.4" fill="#6e6e6e" stroke="#c8c8c8" stroke-width="1.4"/>
<!-- float panel -->
<g fill="none" stroke="#d8d8d8" stroke-width="1.2"><rect x="109.6" y="144" width="12.4" height="12.6" stroke-dasharray="2.2 1.6"/></g>
<g fill="#e0e0e0"><rect x="107.6" y="142" width="3.6" height="3.6"/><rect x="120.6" y="142" width="3.6" height="3.6"/><rect x="107.6" y="155.2" width="3.6" height="3.6"/><rect x="120.6" y="155.2" width="3.6" height="3.6"/><rect x="115" y="149.4" width="1.8" height="1.8"/><rect x="114.2" y="142" width="3.4" height="3.4"/><rect x="114.2" y="155.4" width="3.4" height="3.4"/><rect x="107.6" y="148.6" width="3.4" height="3.4"/><rect x="120.8" y="148.6" width="3.4" height="3.4"/></g>
<text class="b" x="134.8" y="153.2" font-size="12" fill="#f2f2f2" textLength="52" lengthAdjust="spacingAndGlyphs">Transform</text>
<g fill="#d8d8d8"><rect x="107.6" y="171.8" width="1.4" height="20.2"/><rect x="110.8" y="174.4" width="8.2" height="6"/><rect x="110.8" y="183.4" width="13.4" height="6"/></g>
<text class="b" x="134.8" y="184.4" font-size="12" fill="#f2f2f2" textLength="25.8" lengthAdjust="spacingAndGlyphs">Align</text>
<rect x="108" y="205" width="9.6" height="9.6" fill="#d0d0d0"/><rect x="113.6" y="210.6" width="10.6" height="11" fill="#d0d0d0" stroke="#535353" stroke-width="1.2"/>
<rect x="108.4" y="205.4" width="5" height="5" fill="#d0d0d0"/>
<text class="b" x="134.8" y="215.4" font-size="12" fill="#f2f2f2" textLength="50.8" lengthAdjust="spacingAndGlyphs">Pathfind...</text>

<!-- ===== character panel ===== -->
<rect x="1077" y="86.4" width="84" height="163" fill="#3e3e3e"/>
<rect x="1078.2" y="87.4" width="83" height="161" fill="#535353"/>
<rect x="1151" y="87.4" width="10" height="29.6" fill="#474747"/>
<rect x="1078.2" y="117" width="0" height="0"/>
<g fill="#cfcfcf"><path d="M1085.6,99.2 l2.4,-3 l2.4,3z" fill="none" stroke="#cfcfcf" stroke-width="0.9"/><path d="M1085.6,102.6 l2.4,3 l2.4,-3z" fill="none" stroke="#cfcfcf" stroke-width="0.9"/></g>
<text class="b" x="1094.6" y="106.4" font-size="12" fill="#f2f2f2" textLength="47.2" lengthAdjust="spacingAndGlyphs">Character</text>
<rect x="1085.6" y="126" width="76" height="19.5" fill="#494949"/>
<circle cx="1098.6" cy="134" r="3.9" fill="none" stroke="#d6d6d6" stroke-width="1.4"/>
<path d="M1095.8,137 l-3.2,3.4" stroke="#d6d6d6" stroke-width="1.5"/>
<path d="M1102,139.4 h4.6 l-2.3,2.3z" fill="#d6d6d6"/>
<text x="1111" y="140.3" font-size="12" fill="#e0e0e0" textLength="47.6" lengthAdjust="spacingAndGlyphs">Nexa Bold</text>
<rect x="1085.6" y="155.4" width="76" height="20" fill="#494949"/>
<text x="1091" y="169.6" font-size="12" fill="#e6e6e6" textLength="35.7" lengthAdjust="spacingAndGlyphs">Regular</text>
<rect x="1085.6" y="177.5" width="76" height="1.2" fill="#4a4a4a"/>
<!-- size row -->
<text x="1084" y="209.4" font-family="Liberation Serif, serif" style="font-family:'Liberation Serif',serif" font-weight="bold" font-size="13.4" fill="#d8d8d8" textLength="8" lengthAdjust="spacingAndGlyphs">T</text>
<text x="1090.4" y="209.4" font-family="Liberation Serif, serif" style="font-family:'Liberation Serif',serif" font-weight="bold" font-size="23.6" fill="#d8d8d8" textLength="13" lengthAdjust="spacingAndGlyphs">T</text>
<rect x="1108.6" y="192" width="15.4" height="19.6" fill="#4d4d4d"/>
<path d="M1112,198.6 l4,-4 l4,4 M1112,205 l4,4 l4,-4" fill="none" stroke="#e0e0e0" stroke-width="1.5"/>
<rect x="1126" y="192" width="36" height="19.6" fill="#494949"/>
<text x="1129" y="206.4" font-size="12" fill="#e6e6e6" textLength="24" lengthAdjust="spacingAndGlyphs">24 pt</text>
<!-- kerning row -->
<text x="1084" y="235.2" font-size="18.6" fill="#d8d8d8" textLength="18.6" lengthAdjust="spacingAndGlyphs">V/A</text>
<path d="M1094.4,238.4 h8 M1094.4,238.4 l2.6,-2.4 M1094.4,238.4 l2.6,2.4" stroke="#d8d8d8" stroke-width="1.1" fill="none"/>
<rect x="1108.6" y="220.6" width="15.4" height="20" fill="#4d4d4d"/>
<path d="M1112,227 l4,-4 l4,4 M1112,234.4 l4,4 l4,-4" fill="none" stroke="#e0e0e0" stroke-width="1.5"/>
<rect x="1126" y="220.6" width="36" height="20" fill="#494949"/>
<text x="1129" y="234.8" font-size="12" fill="#e6e6e6" textLength="21" lengthAdjust="spacingAndGlyphs">Auto</text>

<!-- ===== vertical scrollbar + dock ===== -->
<rect x="1305" y="476" width="17.6" height="274" fill="#5a5a5a"/>
<rect x="1322.6" y="476" width="2.6" height="292" fill="#484848"/>
<rect x="1325" y="476" width="41" height="292" fill="#535353"/>
<defs><linearGradient id="dg" x1="0" y1="0" x2="1" y2="0"><stop offset="0" stop-color="#5e5e5e"/><stop offset="1" stop-color="#c4c4c4"/></linearGradient></defs>
<g fill="#d0d0d0"><rect x="1338" y="478.8" width="18.4" height="1.3"/><rect x="1338" y="483.8" width="18.4" height="2"/><rect x="1338" y="488.8" width="18.4" height="3.4"/></g>
<rect x="1338.4" y="510.4" width="17.6" height="13.6" fill="url(#dg)" stroke="#d0d0d0" stroke-width="1.4"/>
<rect x="1326" y="536" width="40" height="1" fill="#474747"/>
<path d="M1336,543 h20.6" stroke="#454545" stroke-width="3.4" stroke-dasharray="1.2 1.3"/>
<circle cx="1347.2" cy="563.4" r="7.4" fill="#d2d2d2"/>
<circle cx="1347.2" cy="563.4" r="9.8" fill="none" stroke="#d2d2d2" stroke-width="1.5" stroke-dasharray="1.8 2"/>
<rect x="1341.8" y="586.6" width="14.4" height="15" fill="none" stroke="#d2d2d2" stroke-width="1.5"/>
<rect x="1338" y="595" width="6" height="6" fill="#535353" stroke="#d2d2d2" stroke-width="1.3"/>
<rect x="1341.4" y="598.4" width="6" height="6" fill="#535353" stroke="#d2d2d2" stroke-width="1.3"/>
<rect x="1326" y="613.4" width="40" height="1" fill="#474747"/>
<path d="M1336,620 h20.6" stroke="#454545" stroke-width="3.4" stroke-dasharray="1.2 1.3"/>
<path d="M1347,631.6 h-8.4 v17.6 h17.4 v-8" fill="none" stroke="#d2d2d2" stroke-width="1.7"/>
<path d="M1346.6,641.4 l9.4,-9.6 M1349.6,631.2 h7 v7" fill="none" stroke="#d2d2d2" stroke-width="1.7"/>
<path d="M1347.2,662.2 l9.4,5.2 l-9.4,5.2 l-9.4,-5.2z" fill="#d2d2d2"/>
<path d="M1339.6,672.4 l7.6,4.2 l7.6,-4.2" fill="none" stroke="#d2d2d2" stroke-width="2"/>
<rect x="1338.6" y="692.4" width="11.6" height="12" fill="none" stroke="#d2d2d2" stroke-width="1.5"/>
<rect x="1344.4" y="700" width="11.6" height="12.4" fill="#535353" stroke="#d2d2d2" stroke-width="1.5"/>
<rect x="1326" y="721" width="40" height="1" fill="#474747"/>
<!-- ===== status bar / h scrollbar ===== -->
<rect x="2" y="749.6" width="1321" height="18.4" fill="#565656"/>
<rect x="2" y="749.6" width="458" height="18.4" fill="#4f4f4f"/>
<rect x="4" y="751" width="56" height="17" fill="#474747"/>
<text x="8.6" y="765" font-size="12" fill="#e2e2e2" textLength="36.4" lengthAdjust="spacingAndGlyphs">33.33%</text>
<path d="M64.4,758.4 l4.1,4.1 l4.1,-4.1" fill="none" stroke="#e0e0e0" stroke-width="1.5"/>
<g fill="#6c6c6c"><rect x="89.4" y="755.6" width="1.4" height="8.4"/><path d="M97,755.6 v8.4 l-5,-4.2z"/><path d="M114.6,755.6 v8.4 l-5,-4.2z"/><path d="M197,755.6 v8.4 l5,-4.2z"/><path d="M213,755.6 v8.4 l5,-4.2z"/><rect x="219.2" y="755.6" width="1.4" height="8.4"/></g>
<rect x="122" y="751" width="44" height="17" fill="#474747"/>
<text x="126.6" y="765" font-size="12" fill="#e2e2e2">1</text>
<path d="M170,758.4 l4.1,4.1 l4.1,-4.1" fill="none" stroke="#e0e0e0" stroke-width="1.5"/>
<text x="315" y="764.6" font-size="11.6" fill="#cfcfcf" textLength="42.6" lengthAdjust="spacingAndGlyphs">Selection</text>
<path d="M450.6,754.8 v8.8 l5.4,-4.4z" fill="#e0e0e0"/>
<path d="M473.4,755.4 l-3,3.8 l3,3.8" fill="none" stroke="#777" stroke-width="1.2"/>
<rect x="880.5" y="752.6" width="25" height="13.4" rx="5" fill="#6c6c6c"/>
<path d="M1295,755 l3,4 l-3,4" fill="none" stroke="#888" stroke-width="1.2"/>
<!-- ===== watermark ===== -->
<rect x="1039.8" y="678.3" width="54.7" height="54.2" fill="#3f8f7c" opacity="0.72"/>
<rect x="1094.5" y="678.3" width="217.2" height="54.2" fill="#3f6690" opacity="0.6"/>
<circle cx="1067.3" cy="705.6" r="19.8" fill="none" stroke="#b6babf" stroke-width="5.4"/>
<circle cx="1067.3" cy="705.6" r="12.4" fill="#b6babf"/>
<rect x="1074" y="698" width="14" height="5.4" fill="#b6babf"/>
<rect x="1046.6" y="708" width="14" height="5.4" fill="#b6babf"/>
<rect x="1050.4" y="703.3" width="30" height="4.7" fill="#4c8577"/>
<text class="b" x="1098.4" y="718" font-size="34.6" fill="#b0b5bf" textLength="207.6" lengthAdjust="spacingAndGlyphs"><tspan font-style="italic">e</tspan>Shikhon.com</text>
<!-- small watermark -->
<rect x="1287.8" y="733.2" width="11" height="10.6" fill="#2f9a7e"/>
<rect x="1298.8" y="733.2" width="44.2" height="10.6" fill="#2e5f95"/>
<circle cx="1293.4" cy="738.5" r="3.6" fill="none" stroke="#eef" stroke-width="1"/>
<path d="M1290.6,738.5 h5.6" stroke="#eef" stroke-width="0.9"/>
<text x="1299.8" y="741.4" font-size="7" fill="#f0f4f8" textLength="41.6" lengthAdjust="spacingAndGlyphs">eShikhon.com</text>

<!-- video panel -->
<defs>
  <filter id="bl1" x="-10%" y="-10%" width="120%" height="120%"><feGaussianBlur stdDeviation="0.9"/></filter>
  <filter id="bl2" x="-10%" y="-10%" width="120%" height="120%"><feGaussianBlur stdDeviation="1.6"/></filter>
  <filter id="bl05" x="-10%" y="-10%" width="120%" height="120%"><feGaussianBlur stdDeviation="0.5"/></filter>
  <clipPath id="cv1"><rect x="1161" y="0" width="199.7" height="117.3"/></clipPath>
  <clipPath id="cv3"><rect x="1204" y="238.5" width="112" height="118"/></clipPath>
  <clipPath id="cv4"><rect x="1204" y="358" width="112" height="117.5"/></clipPath>
  <linearGradient id="curt" x1="0" y1="0" x2="1" y2="0">
    <stop offset="0" stop-color="#c07a2a"/><stop offset="0.12" stop-color="#cf9040"/><stop offset="0.24" stop-color="#7c4716"/>
    <stop offset="0.3" stop-color="#c08034"/><stop offset="0.5" stop-color="#cf9a50"/><stop offset="0.68" stop-color="#ad6a22"/>
    <stop offset="0.85" stop-color="#c89650"/><stop offset="1" stop-color="#b47f3c"/>
  </linearGradient>
  <linearGradient id="wall" x1="0" y1="0" x2="1" y2="1">
    <stop offset="0" stop-color="#eceff1"/><stop offset="1" stop-color="#d6dade"/>
  </linearGradient>
</defs>
<rect x="1161" y="0" width="199.7" height="475.5" fill="#1d1d1d"/>
<rect x="1360.4" y="0" width="2.8" height="476" fill="#3e3e3e"/><rect x="1363" y="0" width="3" height="476" fill="#595959"/>
<!-- tile 1 : instructor -->
<g clip-path="url(#cv1)">
 <g filter="url(#bl1)">
  <rect x="1158" y="-3" width="140" height="124" fill="#b97629"/>
  <!-- left fold -->
  <rect x="1158" y="-3" width="36" height="124" fill="#c78327"/>
  <g fill="#dbb684" opacity="0.55"><path d="M1160.3,17.5 L1192.7,12.8 V19.1 L1160.3,23.8z"/><path d="M1160.3,30.0 L1192.7,25.3 V30.8 L1160.3,35.5z"/><path d="M1160.3,40.9 L1192.7,36.2 V41.7 L1160.3,46.4z"/><path d="M1160.3,51.9 L1192.7,47.2 V52.7 L1160.3,57.3z"/><path d="M1160.3,63.6 L1192.7,58.9 V64.4 L1160.3,69.1z"/><path d="M1160.3,75.3 L1192.7,70.6 V75.3 L1160.3,80.0z"/><path d="M1160.3,87.8 L1192.7,83.1 V87.8 L1160.3,92.5z"/><path d="M1160.3,98.8 L1192.7,94.1 V98.8 L1160.3,103.4z"/><path d="M1160.3,109.7 L1192.7,105.0 V109.7 L1160.3,114.4z"/></g>
  <path d="M1158,-3 h17 v10 l-4,4 v8 l-6,3 l-7,1z" fill="#c2441a"/>
  <path d="M1175,-3 h18 v8 l-10,3 l-8,-1z" fill="#d86a1e"/>
  <!-- middle -->
  <path d="M1196,-3 h46 v32 l-10,4 v8 l-12,3 v-6 l-12,3 l-12,6z" fill="#caa370"/>
  <path d="M1210,12 l10,-3 v9 l10,-3 v-9 l10,-3 v10 l-10,3 v8 l-10,3 v-8 l-10,3z" fill="#b8742c" opacity="0.85"/>
  <path d="M1190,66 l54,-6 v14 l-56,8z" fill="#d0a86e"/>
  <g stroke="#5e3410" stroke-width="1.3" fill="none" opacity="0.85"><path d="M1192,60 l50,-6"/><path d="M1192,64 l50,-6"/><path d="M1191,68 l51,-6"/><path d="M1190,72 l30,-4"/></g>
  <g fill="#8f4f16" opacity="0.55"><rect x="1204" y="40" width="4" height="22"/><rect x="1216" y="38" width="4" height="22"/><rect x="1228" y="36" width="4" height="22"/></g>
  <!-- right -->
  <path d="M1242,-3 h52 v14 l-52,12z" fill="#c4a06c"/>
  <g stroke="#5e3410" stroke-width="1.2" fill="none" opacity="0.8"><path d="M1244,6 l28,-7"/><path d="M1243,10 l50,-11"/><path d="M1243,14 l50,-11"/><path d="M1243,18 l50,-11"/></g>
  <path d="M1276,18 h16 v60 h-16z" fill="#c27a30"/>
  <!-- dark fold -->
  <path d="M1193.2,-3 h3.6 L1189.3,59.4 L1187.7,80 H1179.9 L1183,59.4z" fill="#4e2c10"/>
  <!-- door frame / wall -->
  <rect x="1290.5" y="-3" width="7" height="84" fill="#1f1712"/>
  <rect x="1296.5" y="-3" width="68" height="124" fill="url(#wall)"/>
  <!-- chair -->
  <path d="M1172,120 v-30 q2,-11 14,-11 h26 q8,0 8,8 v33z" fill="#7a4c20"/>
  <path d="M1180,120 v-22 h34 v22z" fill="#3c2612"/>
  <path d="M1182,120 v-24 h4.4 v24z M1191,120 v-24 h4.4 v24z M1200,120 v-24 h4.4 v24z" fill="#a87840"/>
  <path d="M1176,97 h40 v-5 h-40z" fill="#6a4018"/>
  <!-- shirt -->
  <path d="M1199,120 q4,-28 22,-36 q14,-8 28,-11 l36,2 q20,6 28,18 q8,12 14,27z" fill="#5b82d2"/>
  <g stroke="#93aeea" stroke-width="2" fill="none" opacity="0.9">
   <path d="M1216,90 q20,8 40,4"/><path d="M1208,100 q26,9 52,3"/><path d="M1204,110 q30,8 50,2"/>
   <path d="M1272,86 q18,2 30,-4"/><path d="M1268,97 q22,3 40,-5"/><path d="M1262,108 q28,4 52,-6"/>
  </g>
  <path d="M1245,76 q8,22 20,24 q-12,10 -24,18" stroke="#2e4a8a" stroke-width="1.5" fill="none"/>
  <!-- neck + face -->
  <path d="M1247,74 q14,16 34,2 l-2,-14 h-30z" fill="#7c5642"/>
  <ellipse cx="1266" cy="55" rx="18" ry="25" fill="#b98b70"/>
  <path d="M1249,62 q4,22 17,22 q13,0 17,-20 q-8,12 -17,12 q-10,0 -17,-14z" fill="#4a362c"/>
  <ellipse cx="1265.5" cy="69" rx="6" ry="2.5" fill="#3a2420"/>
  <path d="M1254,49 h8 M1270,49 h8" stroke="#2a1e1a" stroke-width="2"/>
  <!-- hair -->
  <path d="M1245,52 q-5,-32 22,-36 q24,0 22,28 q-1,6 -3,9 q-1,-16 -8,-18 q-14,-2 -24,2 q-5,6 -9,15z" fill="#1d1917"/>
 </g>
</g>
<!-- tile 2 : avatar -->
<rect x="1161" y="117.3" width="199.7" height="1.2" fill="#4a4a4a"/>
<rect x="1204" y="118.5" width="112" height="118.5" fill="#fbfbf7"/>
<defs><clipPath id="cv2"><rect x="1204" y="118.5" width="112" height="118.5"/></clipPath></defs><path d="M1207,237 C1207,214 1222,199 1247,198.5 H1273 C1298,199 1313,214 1313,237z" fill="#cfcfca" clip-path="url(#cv2)"/>
<circle cx="1260" cy="172.5" r="26.5" fill="#fbfbf7"/>
<circle cx="1260" cy="172.5" r="22.8" fill="#cfcfca"/>
<!-- tile 3 -->
<rect x="1161" y="237" width="199.7" height="1.5" fill="#4a4a4a"/>
<g clip-path="url(#cv3)">
 <g filter="url(#bl1)">
  <rect x="1202" y="236" width="116" height="123" fill="#e0e4ec"/>
  <rect x="1278" y="236" width="40" height="60" fill="#dbe1ec"/>
  <path d="M1264,244 h14 l3,32 l6,2 l-8,38 l-14,-6z" fill="#4b4a42" opacity="0.9"/>
  <path d="M1276,280 l8,-4 l-6,34 l-6,-4z" fill="#8a8a50"/>
  <!-- shirt -->
  <path d="M1207,360 q2,-22 18,-34 l16,-10 l40,-4 q24,8 32,26 l4,22z" fill="#e6dfd0"/>
  <g fill="#5a5040" opacity="0.7">
   <circle cx="1222" cy="335" r="1.2"/><circle cx="1230" cy="345" r="1.2"/><circle cx="1216" cy="350" r="1.2"/><circle cx="1236" cy="330" r="1.2"/><circle cx="1226" cy="353" r="1.2"/>
   <circle cx="1262" cy="330" r="1.2"/><circle cx="1272" cy="340" r="1.2"/><circle cx="1284" cy="332" r="1.2"/><circle cx="1294" cy="345" r="1.2"/><circle cx="1304" cy="352" r="1.2"/><circle cx="1280" cy="350" r="1.2"/><circle cx="1266" cy="350" r="1.2"/><circle cx="1290" cy="322" r="1.2"/><circle cx="1300" cy="336" r="1.2"/><circle cx="1258" cy="342" r="1.2"/>
  </g>
  <g fill="#4a4438" opacity="0.6"><rect x="1214" y="338" width="3" height="1.4"/><rect x="1224" y="328" width="3" height="1.4"/><rect x="1228" y="348" width="3" height="1.4"/><rect x="1256" y="336" width="3" height="1.4"/><rect x="1266" y="326" width="3" height="1.4"/><rect x="1276" y="344" width="3" height="1.4"/><rect x="1286" y="328" width="3" height="1.4"/><rect x="1292" y="352" width="3" height="1.4"/><rect x="1302" y="342" width="3" height="1.4"/><rect x="1262" y="354" width="3" height="1.4"/><rect x="1274" y="320" width="3" height="1.4"/><rect x="1306" y="330" width="3" height="1.4"/></g><g fill="#c9a640" opacity="0.8"><circle cx="1220" cy="343" r="1.1"/><circle cx="1270" cy="333" r="1.1"/><circle cx="1288" cy="340" r="1.1"/><circle cx="1298" cy="350" r="1.1"/><circle cx="1232" cy="338" r="1.1"/></g>
  <!-- collar -->
  <path d="M1238,317 q8,10 16,8 q12,-4 17,-18 l3,8 q-6,14 -18,18 l-2,26 h-9 l2,-28 q-6,-4 -9,-14z" fill="#f05540"/>
  <!-- neck/face -->
  <path d="M1226,276 q-4,-26 12,-32 q18,-6 28,4 q6,10 4,30z" fill="#19191b"/>
  <path d="M1236,298 h32 l-3,20 q-8,9 -15,8 q-8,-4 -14,-28z" fill="#b87c50"/>
  <ellipse cx="1246.8" cy="286" rx="20" ry="28" fill="#c98f62"/>
  <ellipse cx="1268" cy="287" rx="3" ry="6" fill="#b87c50"/>
  <path d="M1236,296 q8,7 18,0 q-8,5 -18,0z" fill="#fff" stroke="#fff" stroke-width="1.5"/>
  <path d="M1232,281 h7 M1248,280 h8" stroke="#2a1a14" stroke-width="2"/>
  <ellipse cx="1235.6" cy="284.4" rx="2.2" ry="1.4" fill="#2a1a14"/><ellipse cx="1252" cy="283.6" rx="2.2" ry="1.4" fill="#2a1a14"/>
  <!-- hair fringe -->
  <path d="M1226,274 q-3,-24 12,-30 q18,-6 28,4 q6,10 4,32 q-3,-6 -4,-12 q-3,-10 -10,-11 q-10,0 -20,6 q-7,4 -10,11z" fill="#19191b"/>
  <!-- dotted strip -->
  <rect x="1204" y="238" width="3.6" height="120" fill="#3c3c86"/>
 </g>
 <g fill="#b8b8e0"><rect x="1205" y="241" width="1.6" height="1.6"/><rect x="1205" y="245" width="1.6" height="1.6"/><rect x="1205" y="249" width="1.6" height="1.6"/><rect x="1205" y="253" width="1.6" height="1.6"/><rect x="1205" y="257" width="1.6" height="1.6"/><rect x="1205" y="261" width="1.6" height="1.6"/><rect x="1205" y="265" width="1.6" height="1.6"/><rect x="1205" y="269" width="1.6" height="1.6"/><rect x="1205" y="273" width="1.6" height="1.6"/><rect x="1205" y="277" width="1.6" height="1.6"/><rect x="1205" y="281" width="1.6" height="1.6"/><rect x="1205" y="285" width="1.6" height="1.6"/><rect x="1205" y="289" width="1.6" height="1.6"/><rect x="1205" y="293" width="1.6" height="1.6"/><rect x="1205" y="297" width="1.6" height="1.6"/><rect x="1205" y="301" width="1.6" height="1.6"/><rect x="1205" y="305" width="1.6" height="1.6"/><rect x="1205" y="309" width="1.6" height="1.6"/><rect x="1205" y="313" width="1.6" height="1.6"/><rect x="1205" y="317" width="1.6" height="1.6"/><rect x="1205" y="321" width="1.6" height="1.6"/><rect x="1205" y="325" width="1.6" height="1.6"/><rect x="1205" y="329" width="1.6" height="1.6"/><rect x="1205" y="333" width="1.6" height="1.6"/><rect x="1205" y="337" width="1.6" height="1.6"/><rect x="1205" y="341" width="1.6" height="1.6"/><rect x="1205" y="345" width="1.6" height="1.6"/><rect x="1205" y="349" width="1.6" height="1.6"/><rect x="1205" y="353" width="1.6" height="1.6"/></g>
</g>
<!-- tile 4 -->
<rect x="1161" y="356.5" width="199.7" height="1.5" fill="#4a4a4a"/>
<g clip-path="url(#cv4)">
 <g filter="url(#bl1)">
  <rect x="1202" y="356" width="116" height="122" fill="#d6a284"/>
  <!-- stairs bands -->
  <path d="M1280,356 h40 v12 l-40,-4z" fill="#ddb096"/>
  <path d="M1286,372 l34,5 v12 l-34,-7z" fill="#dfb59c"/>
  <path d="M1290,394 l30,8 v14 l-30,-10z" fill="#e2bba4"/>
  <path d="M1284,430 l36,14 v12 l-36,-14z" fill="#e6c4ae"/>
  <path d="M1290,406 l30,10 v28 l-36,-14z" fill="#d0987a"/>
  <path d="M1202,356 h26 v32 h-26z" fill="#f7efe9"/>
  <path d="M1202,402 l28,-8 v10 l-28,10z" fill="#f0d8c8"/>
  <path d="M1202,424 l30,8 v10 l-30,-10z" fill="#eccdb8"/>
  <path d="M1202,444 l24,10 v10 l-24,-10z" fill="#f0dccf"/>
  <path d="M1216,392 l8,-6 l4,16 l-12,2z" fill="#5a4238"/>
  <path d="M1206,402 q2,-8 4,0 v10 h-4z" fill="#e8eef4"/>
  <!-- shirt -->
  <path d="M1218,480 q2,-20 22,-34 l14,6 q14,4 26,-8 q22,6 38,24 v12z" fill="#dde0e5"/>
  <!-- neck -->
  <path d="M1240,446 q16,20 44,-2 l-2,-14 h-38z" fill="#b06a44"/>
  <!-- face -->
  <ellipse cx="1257.5" cy="419" rx="28" ry="35" fill="#c98058"/>
  <ellipse cx="1256" cy="410" rx="14" ry="18" fill="#d8906a" opacity="0.7"/>
  <ellipse cx="1243.5" cy="405.5" rx="4" ry="3.2" fill="#2a1610"/>
  <ellipse cx="1270" cy="408" rx="4" ry="3.2" fill="#2a1610"/>
  <path d="M1234,398 q8,-5 16,-1 M1263,400 q8,-4 16,2" stroke="#1a100c" stroke-width="2.6" fill="none"/>
  <path d="M1246,433 q10,-3 20,0" stroke="#6a3424" stroke-width="2" fill="none"/>
  <path d="M1250,424 q6,3 12,0" stroke="#a85c3c" stroke-width="2" fill="none"/>
  <!-- hair -->
  <path d="M1228,402 q-8,-20 -2,-34 q6,-12 30,-12 q30,-2 42,12 q6,12 -2,30 q-4,8 -10,12 q2,-12 0,-20 q-2,-8 -12,-8 q-20,2 -34,2 q-8,4 -12,18z" fill="#151416"/>
 </g>
</g>
<rect x="1161" y="475.3" width="199.7" height="1" fill="#3a3a3a"/>

</svg>
</body></html>
